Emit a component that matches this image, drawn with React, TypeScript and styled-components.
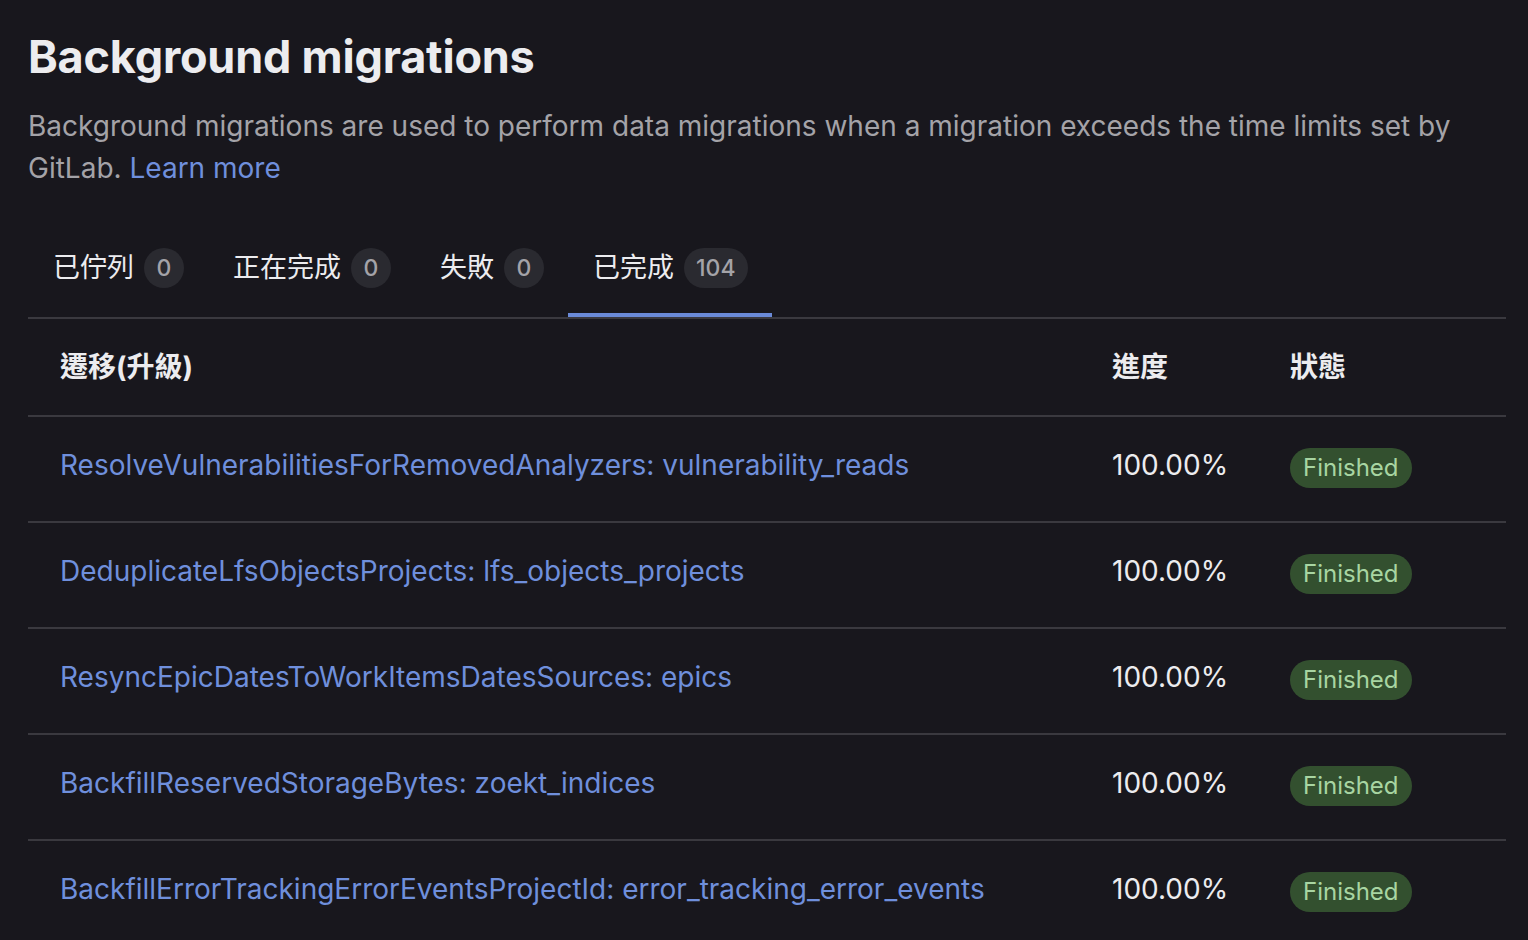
import React from "react";
import styled, { createGlobalStyle } from "styled-components";

const GlobalStyle = createGlobalStyle`
  html, body {
    margin: 0;
    padding: 0;
    background: #18171d;
  }
  body {
    font-family: Inter, "Noto Sans CJK TC", sans-serif;
    color: #ececef;
  }
`;

type Migration = {
  id: number;
  name: string;
  progress: string;
  status: string;
};

const migrations: Migration[] = [
  { id: 1, name: "ResolveVulnerabilitiesForRemovedAnalyzers: vulnerability_reads", progress: "100.00%", status: "Finished" },
  { id: 2, name: "DeduplicateLfsObjectsProjects: lfs_objects_projects", progress: "100.00%", status: "Finished" },
  { id: 3, name: "ResyncEpicDatesToWorkItemsDatesSources: epics", progress: "100.00%", status: "Finished" },
  { id: 4, name: "BackfillReservedStorageBytes: zoekt_indices", progress: "100.00%", status: "Finished" },
  { id: 5, name: "BackfillErrorTrackingErrorEventsProjectId: error_tracking_error_events", progress: "100.00%", status: "Finished" },
];

const tabs = [
  { label: "已佇列", count: 0 },
  { label: "正在完成", count: 0 },
  { label: "失敗", count: 0 },
  { label: "已完成", count: 104 },
];

const App = () => {
  return (
    <Page>
      <GlobalStyle />
      <Title>Background migrations</Title>
      <Description>
        Background migrations are used to perform data migrations when a migration exceeds the time limits set by
        GitLab. <Link href="#">Learn more</Link>
      </Description>

      <TabList>
        {tabs.map((tab, i) => (
          <Tab key={tab.label} $active={i === tabs.length - 1}>
            <TabLabel>{tab.label}</TabLabel>
            <CountBadge>{tab.count}</CountBadge>
          </Tab>
        ))}
      </TabList>

      <Table>
        <HeaderRow>
          <HeaderCell>遷移(升級)</HeaderCell>
          <HeaderCell>進度</HeaderCell>
          <HeaderCell>狀態</HeaderCell>
        </HeaderRow>
        {migrations.map((m) => (
          <Row key={m.id}>
            <Cell>
              <Link href="#">{m.name}</Link>
            </Cell>
            <Cell>{m.progress}</Cell>
            <Cell>
              <StatusBadge>{m.status}</StatusBadge>
            </Cell>
          </Row>
        ))}
      </Table>
    </Page>
  );
};

export default App;

const Page = styled.main`
  padding: 29px 22px 0 28px;
  height: 940px;
  box-sizing: border-box;
  overflow: hidden;
`;

const Title = styled.h1`
  margin: 0;
  font-size: 45px;
  line-height: 56px;
  font-weight: 700;
  letter-spacing: -0.2px;
  color: #ececef;
`;

const Description = styled.p`
  margin: 20px 0 0;
  font-size: 28px;
  line-height: 42px;
  color: #a4a3a8;
`;

const Link = styled.a`
  color: #6f8fdc;
  text-decoration: none;
`;

const TabList = styled.nav`
  display: flex;
  margin-top: 30px;
  border-bottom: 2px solid #3a393f;
`;

const Tab = styled.div<{ $active?: boolean }>`
  display: flex;
  align-items: center;
  gap: 10px;
  padding: 29px 24px 29px 25px;
  box-shadow: ${(p) => (p.$active ? "inset 0 -4px 0 #6a8ad8" : "none")};
`;

const TabLabel = styled.span`
  font-size: 27px;
  line-height: 40px;
  color: #ececef;
`;

const CountBadge = styled.span`
  display: inline-flex;
  align-items: center;
  justify-content: center;
  min-width: 40px;
  height: 40px;
  box-sizing: border-box;
  padding: 0 12px;
  border-radius: 20px;
  background: #2a2a30;
  color: #a4a3a8;
  font-size: 23px;
  font-weight: 500;
`;

const Table = styled.div`
  display: grid;
  grid-template-columns: 1fr 178px 248px;
`;

const HeaderRow = styled.div`
  display: contents;
`;

const HeaderCell = styled.div`
  padding: 28px 32px;
  font-size: 28px;
  line-height: 40px;
  font-weight: 700;
  color: #ececef;
  border-bottom: 2px solid #3a393f;
`;

const Row = styled.div`
  display: contents;
`;

const Cell = styled.div`
  padding: 28px 32px 33px;
  font-size: 28px;
  line-height: 40px;
  color: #ececef;
  border-bottom: 2px solid #3a393f;
  white-space: nowrap;
`;

const StatusBadge = styled.span`
  display: inline-flex;
  align-items: center;
  height: 40px;
  margin-top: 3px;
  padding: 0 13px;
  border-radius: 20px;
  background: #33502f;
  color: #a8d5a2;
  font-size: 24px;
  vertical-align: top;
`;
